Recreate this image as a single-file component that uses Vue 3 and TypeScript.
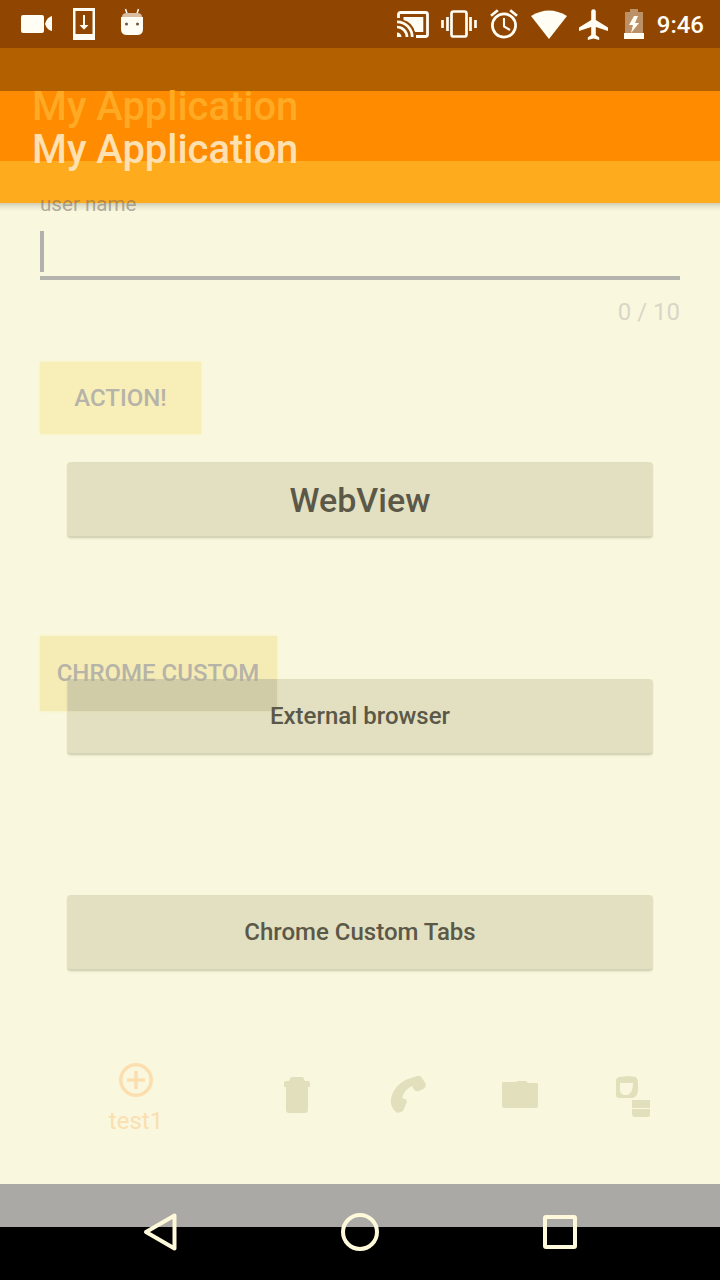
<script setup lang="ts">
interface Choice {
  label: string
  large: boolean
}

const title = 'My Application'
const choices: Choice[] = [
  { label: 'WebView', large: true },
  { label: 'External browser', large: false },
  { label: 'Chrome Custom Tabs', large: false },
]
</script>

<template>
  <div class="phone">
    <div class="layer backdrop">
      <div class="band status-band"></div>
      <div class="band toolbar-shade"></div>
      <div class="band toolbar-top"><span class="title ghost">{{ title }}</span></div>
      <div class="band toolbar-low"></div>
      <div class="band body-band"></div>
      <div class="band nav-shade"></div>
      <div class="band nav-band"></div>
    </div>

    <div class="layer form">
      <span class="field-label">user name</span>
      <div class="field"><i class="caret"></i></div>
      <span class="counter">0 / 10</span>
      <div class="flat action">ACTION!</div>
      <div class="flat custom">CHROME CUSTOM</div>
      <div class="tabs">
        <div class="tab first">
          <svg width="36" height="36" viewBox="0 0 36 36" fill="none" stroke="currentColor" stroke-width="3.6">
            <circle cx="18" cy="18" r="15.2" />
            <path d="M18 9v18M9 18h18" />
          </svg>
          <span>test1</span>
        </div>
        <div class="tab">
          <svg width="28" height="38" viewBox="0 0 28 38" fill="currentColor">
            <path d="M7 4q0-2 2-2h10q2 0 2 2l1 2h3q2 0 2 2v4h-2v23q0 3-3 3H6q-3 0-3-3V12H1V8q0-2 2-2h3z" />
          </svg>
        </div>
        <div class="tab">
          <svg width="36" height="38" viewBox="0 0 36 38" fill="currentColor">
            <path d="M21 3l6-2q3-1 5 2l4 6-1 4-6 3q-4 1-6-3l-1-2q-8 4-10 12l3 1q3 1 1 5l-3 7-5 2q-5-2-7-9C0 17 9 6 21 3z" />
          </svg>
        </div>
        <div class="tab">
          <svg width="38" height="30" viewBox="0 0 38 30" fill="currentColor">
            <path d="M2 2h13l2-1h8l2 2h9q1 0 1 2v22q0 1-2 1H3q-2 0-2-2V3z" />
          </svg>
        </div>
        <div class="tab">
          <svg width="36" height="43" viewBox="0 0 36 43" fill="currentColor">
            <path fill-rule="evenodd" d="M4 2l9-1 8 1q2 2 2 6v7q0 6-5 8H4q-3 0-3-3V5q0-2 3-3zM5 8v7q0 4 4 5h4q5-3 5-12z" />
            <path d="M17 25h18v8H17zM17 34h18v6q0 2-3 2H20q-3 0-3-3z" />
          </svg>
        </div>
      </div>
    </div>

    <div class="layer screen">
      <header class="status">
        <div class="notifications">
          <svg width="32" height="20" viewBox="0 0 32 20" fill="currentColor">
            <path d="M2 1h19q2 0 2 2v14q0 2-2 2H2q-2 0-2-2V3q0-2 2-2zM31 2v15q-5-1-7-7 2-7 7-8z" />
          </svg>
          <svg class="download" width="22" height="32" viewBox="0 0 22 32">
            <path fill="currentColor" fill-rule="evenodd" d="M0 0h22v32H0zM2.500 3v23h17V3z" />
            <path fill="none" stroke="currentColor" stroke-width="2" d="M11 7v13" />
            <path fill="currentColor" d="M6.500 17h9L11 21.800z" />
          </svg>
          <svg class="robot" width="24" height="28" viewBox="0 0 24 28">
            <path stroke="currentColor" stroke-width="1.500" d="M5.500 1l2 6M18.500 1l-2 6" />
            <path class="robot-top" d="M2 9q0-4 5-4h10q5 0 5 4z" />
            <path fill="currentColor" d="M1 9h22v12q0 6-6 6H7q-6 0-6-6z" />
            <circle class="eye" cx="6.500" cy="16" r="1.500" />
            <circle class="eye" cx="17.500" cy="16" r="1.500" />
          </svg>
        </div>
        <div class="indicators">
          <svg width="32" height="27" viewBox="0 0 32 27">
            <path fill="none" stroke="currentColor" stroke-width="2.800" d="M1.500 7V3.500q0-2 2-2h25q2 0 2 2v20q0 2-2 2H19" />
            <path fill="currentColor" d="M6.500 6h19.800v15H18Q15 11 6.500 9z" />
            <path fill="none" stroke="currentColor" stroke-width="2.700" d="M0 10.800a15.200 15.200 0 0 1 15.200 15.200M0 16a10 10 0 0 1 10 10" />
            <path fill="currentColor" d="M0 21.500a4.500 4.500 0 0 1 4.500 4.500H0z" />
          </svg>
          <svg class="vibrate" width="36" height="28" viewBox="0 0 36 28" fill="none" stroke="currentColor" stroke-width="2.700">
            <rect x="10.500" y="1.500" width="15" height="25" rx="2" />
            <path d="M6.500 7v14M1.500 10v8M29.500 7v14M34.500 10v8" />
          </svg>
          <svg class="alarm" width="28" height="30" viewBox="0 0 28 30" fill="none" stroke="currentColor" stroke-width="2.700">
            <circle cx="14" cy="16.500" r="11.600" />
            <path d="M1 6.800L7.800 1.200M27 6.800l-6.800-5.600" />
            <path stroke-width="2.100" d="M14 9v8.500l6 3.500" />
          </svg>
          <svg class="wifi" width="36" height="29" viewBox="0 0 36 29" fill="currentColor">
            <path d="M0 6Q18-5 36 6L18 29z" />
          </svg>
          <svg class="plane" width="29" height="31" viewBox="0 0 29 31" fill="currentColor">
            <path d="M12.200 2.500a2.300 2.300 0 0 1 4.600 0V11L29 18.500V22l-12.200-4v8l3.400 2.600V31l-5.700-1.600L8.800 31v-2.400l3.400-2.600v-8L0 22v-3.500L12.200 11z" />
          </svg>
          <svg class="battery" width="20" height="30" viewBox="0 0 20 30">
            <path class="battery-body" d="M6 0h8v3h5v22H1V3h5z" />
            <path fill="currentColor" d="M0 24h20v6H0zM10 7l-5 9h4l-2 8 8-10h-4l3-7z" />
          </svg>
          <span class="clock">9:46</span>
        </div>
      </header>
      <div class="toolbar"><span class="title">{{ title }}</span></div>
      <main class="choices">
        <div v-for="choice in choices" :key="choice.label" class="choice" :class="{ large: choice.large }">
          {{ choice.label }}
        </div>
      </main>
      <footer class="navigation">
        <svg width="40" height="40" viewBox="0 0 40 40"><path d="M34.500 3.500v33L6 20z" /></svg>
        <svg width="40" height="40" viewBox="0 0 40 40"><circle cx="20" cy="20" r="17" /></svg>
        <svg width="40" height="40" viewBox="0 0 40 40"><rect x="5" y="5" width="30" height="30" rx="1" /></svg>
      </footer>
    </div>
  </div>
</template>

<style>
body {
  margin: 0;
}
</style>

<style scoped>
.phone {
  display: grid;
  width: 720px;
  height: 1280px;
  overflow: hidden;
  font-family: Roboto, "Liberation Sans", sans-serif;
}
.layer {
  grid-area: 1 / 1;
  display: flex;
  flex-direction: column;
  width: 720px;
  height: 1280px;
  box-sizing: border-box;
}
svg {
  display: block;
  flex: none;
}
.band {
  flex: none;
}
.status-band {
  height: 48px;
  background: #904500;
}
.toolbar-shade {
  height: 43px;
  background: #b36000;
}
.toolbar-top {
  height: 70px;
  background: #fe8b00;
  display: flex;
}
.toolbar-low {
  height: 42px;
  background: #feab1e;
}
.body-band {
  height: 981px;
  background: linear-gradient(#cfcdb4 0, #e5e3ca 3px, #f9f8de 8px);
}
.nav-shade {
  height: 43px;
  background: #aaa9a5;
}
.nav-band {
  height: 53px;
  background: #000;
}
.title {
  font-size: 39.900px;
  font-weight: 500;
  line-height: 48px;
  white-space: pre;
  color: #ffe0b0;
  margin-left: 32px;
}
.title.ghost {
  color: #ffaa24;
  margin-top: -8px;
}
.form {
  padding: 192px 40px 0;
}
.field-label {
  height: 24px;
  font-size: 20.600px;
  line-height: 24px;
  color: rgba(110, 100, 95, 0.52);
}
.field {
  height: 64px;
  box-sizing: border-box;
  padding-top: 15px;
  border-bottom: 4px solid #b5b3ae;
}
.caret {
  display: block;
  width: 4px;
  height: 41px;
  background: #b3b1ad;
}
.counter {
  align-self: flex-end;
  margin-top: 18px;
  font-size: 24px;
  line-height: 28px;
  color: #d9d6c8;
}
.flat {
  display: flex;
  align-items: center;
  justify-content: center;
  box-sizing: border-box;
  height: 72px;
  font-size: 24px;
  font-weight: 500;
  color: #b6b3a8;
  background: #f8eeb8;
  box-shadow: 0 0 3px #f8eeb8;
}
.action {
  margin-top: 36px;
  width: 161px;
}
.custom {
  margin-top: 202px;
  padding: 0 1px 2px 0;
  width: 237px;
  height: 75px;
  background: linear-gradient(#f4ebb5 43px, #e2dcb8 43px);
}
.tabs {
  display: grid;
  grid-template-columns: 192px 130px 92px 132px 94px;
  margin-top: 350px;
  height: 80px;
  color: #e2e0bc;
}
.custom {
  background: linear-gradient(#e0dbba, #e0dbba) 28px 43px no-repeat, #f4ebb5;
}
.tab {
  display: flex;
  flex-direction: column;
  align-items: center;
  padding-top: 14px;
}
.tab.first {
  padding-top: 1px;
  gap: 9px;
  color: #fbdfb0;
  font-size: 24px;
  line-height: 28px;
}
.tab:nth-child(4) {
  padding-top: 19px;
}
.status {
  display: flex;
  justify-content: space-between;
  height: 48px;
  box-sizing: border-box;
  padding: 0 16px 0 21px;
  color: #fffdf4;
}
.notifications,
.indicators {
  display: flex;
  align-items: center;
}
.download {
  margin-left: 20px;
}
.robot {
  margin-left: 25px;
  margin-top: -5px;
}
.robot-top {
  fill: #d9bea1;
}
.eye {
  fill: #70563f;
}
.vibrate {
  margin-left: 12px;
}
.alarm {
  margin-left: 13px;
}
.wifi {
  margin-left: 13px;
}
.plane {
  margin-left: 12px;
}
.battery {
  margin-left: 16px;
}
.battery-body {
  fill: #bd9168;
}
.clock {
  margin-left: 13px;
  margin-top: 2px;
  font-size: 24px;
  font-weight: 500;
  line-height: 30px;
}
.toolbar {
  display: flex;
  height: 155px;
  box-sizing: border-box;
  padding-top: 78px;
}
.choices {
  display: flex;
  flex-direction: column;
  gap: 140.500px;
  height: 981px;
  box-sizing: border-box;
  padding: 259px 67px 0;
}
.choice {
  display: flex;
  flex: none;
  align-items: center;
  justify-content: center;
  height: 76px;
  box-sizing: border-box;
  border-bottom: 2px solid rgba(90, 80, 70, 0.08);
  border-radius: 4px;
  background: rgba(172, 170, 125, 0.3);
  box-shadow: 0 1px 2px rgba(90, 85, 50, 0.12);
  color: #5b5848;
  font-size: 24px;
  font-weight: 500;
}
.choice.large {
  padding-top: 2px;
  font-size: 34px;
}
.navigation {
  display: flex;
  justify-content: center;
  align-items: center;
  gap: 160px;
  height: 96px;
}
.navigation svg {
  fill: none;
  stroke: #fff9dc;
  stroke-width: 4;
  stroke-linejoin: round;
}
</style>
